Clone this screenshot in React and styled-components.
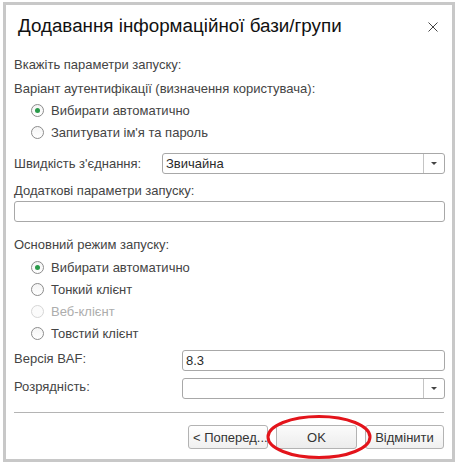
import React from "react";
import styled, { createGlobalStyle } from "styled-components";

const Global = createGlobalStyle`
  html, body { margin: 0; padding: 0; background: #ffffff; }
  body { font-family: "Liberation Sans", Arial, sans-serif; }
  * { box-sizing: border-box; }
`;

const Window = styled.div`
  margin: 2px 0 0 3px;
  width: 452px;
  height: 460px;
  border: 3px solid #c8c8c8;
  background: #fff;
  display: flex;
  flex-direction: column;
`;

const Header = styled.div`
  height: 42px;
  display: flex;
  align-items: center;
  justify-content: space-between;
  padding: 0 14px 0 12px;
`;

const Title = styled.div`
  font-size: 18.8px;
  color: #111;
`;

const Close = styled.div`
  width: 10px;
  height: 10px;
  display: flex;
  margin-top: 1px;
`;

const Content = styled.div`
  display: flex;
  flex-direction: column;
  padding: 0 7px 0 8px;
`;

const Line = styled.div`
  height: ${(p) => p.$h || 22}px;
  margin-top: ${(p) => p.$mt || 0}px;
  display: flex;
  align-items: ${(p) => (p.$top ? "flex-start" : "center")};
  font-size: 13px;
  color: #444;
  position: relative;
`;

const Label = styled.div`
  width: ${(p) => (p.$w ? p.$w + "px" : "auto")};
  flex-shrink: 0;
  padding-top: ${(p) => p.$pt || 0}px;
  font-size: 13px;
  color: #444;
`;

const RadioRow = styled.div`
  height: 22px;
  margin-top: ${(p) => p.$mt || 0}px;
  display: flex;
  align-items: center;
  padding-left: 17px;
  font-size: 13px;
  color: ${(p) => (p.$disabled ? "#adadad" : "#444")};
`;

const Circle = styled.span`
  width: 13px;
  height: 13px;
  border-radius: 50%;
  border: 1px solid ${(p) => (p.$disabled ? "#d6d6d6" : "#8c8c8c")};
  background: ${(p) => (p.$disabled ? "#fbfbfb" : "linear-gradient(#f4f4f4, #ffffff)")};
  display: flex;
  align-items: center;
  justify-content: center;
  margin-right: 7px;
  flex-shrink: 0;
`;

const Dot = styled.span`
  width: 5px;
  height: 5px;
  border-radius: 50%;
  background: #2a9a4a;
`;

const Field = styled.div`
  flex: 1;
  height: 21px;
  border: 1px solid #a8a8a8;
  border-radius: 3px;
  display: flex;
  align-items: center;
  background: #fff;
  overflow: hidden;
`;

const FieldText = styled.div`
  flex: 1;
  padding-left: 3px;
  font-size: 13px;
  color: #2a2a2a;
`;

const DropBtn = styled.div`
  width: 21px;
  height: 100%;
  border-left: 1px solid #c4c4c4;
  display: flex;
  align-items: center;
  justify-content: center;
`;

const Arrow = styled.span`
  width: 0;
  height: 0;
  border-left: 3px solid transparent;
  border-right: 3px solid transparent;
  border-top: 3px solid #444;
`;

const Separator = styled.div`
  height: 1px;
  background: #b4b4b4;
  margin: 13px 1px 0 0;
`;

const Buttons = styled.div`
  margin-top: 12px;
  display: flex;
  justify-content: flex-end;
  gap: 8px;
  padding-right: 1px;
  position: relative;
`;

const Button = styled.div`
  width: ${(p) => p.$w || 80}px;
  height: 24px;
  border: 1px solid #b3b3b3;
  border-radius: 3px;
  background: ${(p) => (p.$default ? "linear-gradient(#fbfbfb, #ececec)" : "linear-gradient(#ffffff, #f0f0f0)")};
  display: flex;
  align-items: center;
  justify-content: ${(p) => (p.$left ? "flex-start" : "center")};
  padding-left: ${(p) => (p.$left ? 4 : 0)}px;
  font-size: 13px;
  color: #333;
  white-space: nowrap;
  overflow: hidden;
`;

const Highlight = styled.svg`
  position: absolute;
  left: 252px;
  top: -10px;
  width: 106px;
  height: 44px;
  pointer-events: none;
`;

function Radio({ checked, disabled, children, mt }) {
  return (
    <RadioRow $disabled={disabled} $mt={mt}>
      <Circle $disabled={disabled}>{checked && <Dot />}</Circle>
      {children}
    </RadioRow>
  );
}

function Select({ value }) {
  return (
    <Field>
      <FieldText>{value}</FieldText>
      <DropBtn>
        <Arrow />
      </DropBtn>
    </Field>
  );
}

export default function App() {
  return (
    <>
      <Global />
      <Window>
        <Header>
          <Title>Додавання інформаційної бази/групи</Title>
          <Close>
            <svg width="10" height="10" viewBox="0 0 10 10">
              <path d="M0.5 0.5 L9.5 9.5 M9.5 0.5 L0.5 9.5" stroke="#444" strokeWidth="1" fill="none" />
            </svg>
          </Close>
        </Header>
        <Content>
          <Line $mt={6}>Вкажіть параметри запуску:</Line>
          <Line $mt={3} $h={21}>Варіант аутентифікації (визначення користувача):</Line>
          <Radio checked>Вибирати автоматично</Radio>
          <Radio>Запитувати ім'я та пароль</Radio>
          <Line $mt={10} $h={21}>
            <Label $w={148}>Швидкість з'єднання:</Label>
            <Select value="Звичайна" />
          </Line>
          <Line $mt={6} $h={20}>Додаткові параметри запуску:</Line>
          <Line $mt={1} $h={21}>
            <Field />
          </Line>
          <Line $mt={11}>Основний режим запуску:</Line>
          <Radio mt={1} checked>Вибирати автоматично</Radio>
          <Radio>Тонкий клієнт</Radio>
          <Radio disabled>Веб-клієнт</Radio>
          <Radio>Товстий клієнт</Radio>
          <Line $mt={6} $h={21} $top>
            <Label $w={168} $pt={1}>Версія BAF:</Label>
            <Field>
              <FieldText>8.3</FieldText>
            </Field>
          </Line>
          <Line $mt={7} $h={21} $top>
            <Label $w={168} $pt={1}>Розрядність:</Label>
            <Select value="" />
          </Line>
          <Separator />
          <Buttons>
            <Button $left>&lt; Поперед...</Button>
            <Button $w={81} $default>OK</Button>
            <Button $w={79}>Відмінити</Button>
            <Highlight viewBox="0 0 106 44">
              <ellipse cx="53" cy="22" rx="51" ry="20.5" fill="none" stroke="#e3141b" strokeWidth="3" />
            </Highlight>
          </Buttons>
        </Content>
      </Window>
    </>
  );
}
